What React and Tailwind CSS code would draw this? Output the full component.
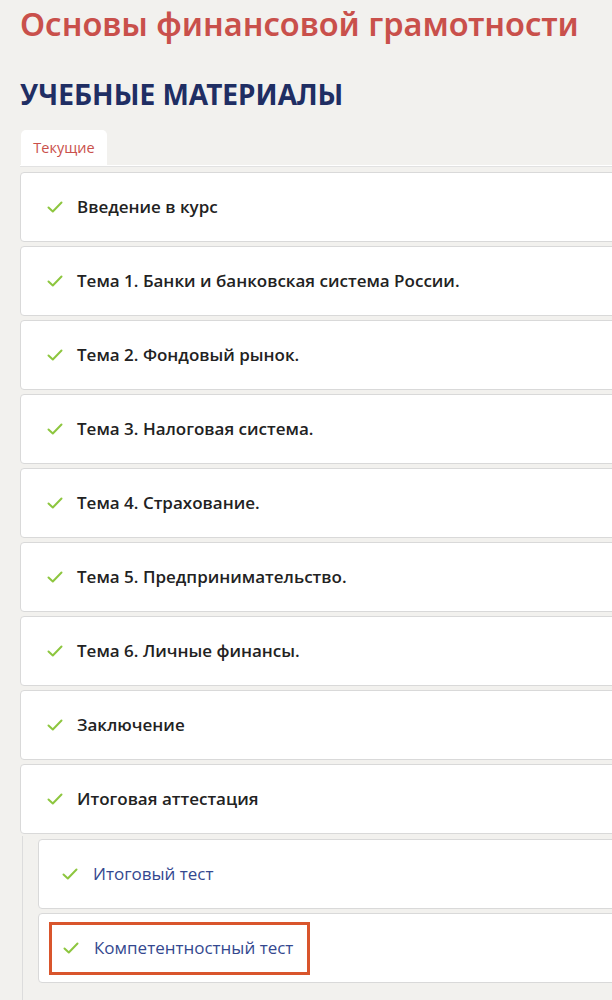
import React from 'react';

const topics = [
    "Введение в курс",
    "Тема 1. Банки и банковская система России.",
    "Тема 2. Фондовый рынок.",
    "Тема 3. Налоговая система.",
    "Тема 4. Страхование.",
    "Тема 5. Предпринимательство.",
    "Тема 6. Личные финансы.",
    "Заключение",
    "Итоговая аттестация"
];

const Check = () => (
    <svg width="16" height="12" viewBox="0 0 16 12" fill="none" className="shrink-0">
        <path d="M1.5 6.5 L5.8 10.5 L14.5 1.5" stroke="#8dc63f" strokeWidth="2" strokeLinecap="round" strokeLinejoin="round" />
    </svg>
);

const App = () => {
    return (
        <div className="min-h-[1000px] bg-[#f2f1ee] pl-5 pt-[2px] overflow-hidden" style={{ fontFamily: '"Open Sans", "Noto Sans", sans-serif' }}>
            <h1 className="text-[32.5px] leading-[44px] font-semibold text-[#c9504b] whitespace-nowrap" style={{ fontFamily: '"Noto Sans", "Open Sans", sans-serif' }}>
                Основы финансовой грамотности
            </h1>
            <h2 className="mt-[30px] text-[28px] leading-[36px] font-bold text-[#1f2e63] whitespace-nowrap" style={{ fontFamily: '"Noto Sans", "Open Sans", sans-serif' }}>
                УЧЕБНЫЕ МАТЕРИАЛЫ
            </h2>

            <div className="mt-[18px] flex">
                <div className="ml-[1px] w-[86px] h-[35px] bg-white rounded-t-[5px] flex items-center justify-center text-[14.5px] text-[#c9504b]">
                    Текущие
                </div>
            </div>
            <div className="h-[2px] bg-white border-b border-[#e2e2e2] -mr-4"></div>

            <div className="mt-[5px] flex flex-col gap-[4px] -mr-4">
                {topics.map((t, i) => (
                    <div key={i} className="h-[70px] bg-white border border-[#d9d9d9] rounded-[4px] flex items-center pl-[26px] gap-[14px]">
                        <Check />
                        <span className="text-[17px] font-semibold text-[#222]">{t}</span>
                    </div>
                ))}
            </div>

            <div className="ml-[2px] mt-[2px] border-l border-[#dcdcdc] pl-[15px] pt-[3px] pb-[20px] flex flex-col gap-[4px] -mr-4">
                <div className="h-[70px] bg-white border border-[#d9d9d9] rounded-[4px] flex items-center pl-[23px] gap-[15px]">
                    <Check />
                    <span className="text-[17px] text-[#34488f]">Итоговый тест</span>
                </div>
                <div className="h-[70px] bg-white border border-[#d9d9d9] rounded-[4px] flex items-center pl-[10px]">
                    <div className="h-[53px] w-[261px] border-[3px] border-[#d9552c] flex items-center pl-[11px] gap-[15px]">
                        <Check />
                        <span className="text-[17px] text-[#34488f]">Компетентностный тест</span>
                    </div>
                </div>
            </div>
        </div>
    );
};

export default App;
